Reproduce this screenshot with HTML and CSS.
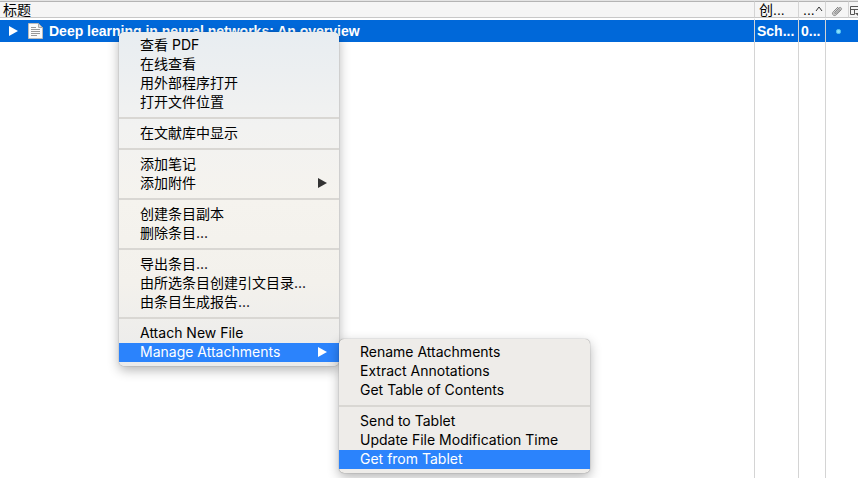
FILE: index.html
```html
<!DOCTYPE html>
<html lang="zh-CN">
<head>
<meta charset="utf-8">
<title>Library</title>
<link rel="stylesheet" href="styles.css">
</head>
<body>
<table class="items">
  <colgroup>
    <col>
    <col class="col-creator">
    <col class="col-year">
    <col class="col-attach">
    <col class="col-picker">
  </colgroup>
  <thead>
    <tr>
      <th>标题</th>
      <th>创...</th>
      <th><span class="sorted">...<svg class="sort" viewBox="0 0 8 8"><path d="M1 5 4 1l3 4"/></svg></span></th>
      <th class="icon-cell"><svg class="clip" viewBox="0 0 12 12"><path class="clip-body" d="M2.500 9.500 9 3"/><path d="M9.500 4 5.200 8.300c-.8.8-2-.3-1.200-1.200L8 3c1.600-1.500 3.500.4 2 2L5.300 9.800C3 12 0 9 2.200 6.800L7 2"/></svg></th>
      <th class="icon-cell"><svg class="picker" viewBox="0 0 12 12"><path d="M1.500 1.500h10v5M1.500 1.500v8h4M1.500 4.500h10M5.500 4.500v5"/><path class="solid" d="M6 8h6l-3 3z"/></svg></th>
    </tr>
  </thead>
  <tbody>
    <tr class="selected">
      <td>
        <div class="title">
          <svg class="twisty" viewBox="0 0 9 10"><path d="M0 0 9 5 0 10z"/></svg>
          <svg class="page" viewBox="0 0 15 16"><path class="sheet" d="M.5.500h10l4 4v11H.500z"/><path class="fold" d="M10.500.500v4h4z"/><path class="lines" d="M3 4.500h5M3 6.500h9M3 8.500h9M3 10.500h9M3 12.500h6"/></svg>
          <span>Deep learning in neural networks: An overview</span>
        </div>
      </td>
      <td>Sch...</td>
      <td>0...</td>
      <td class="icon-cell"><i class="dot"></i></td>
      <td></td>
    </tr>
    <tr class="rest"><td></td><td></td><td></td><td></td><td></td></tr>
  </tbody>
</table>

<div class="menu context" role="menu">
  <button role="menuitem">查看 PDF</button>
  <button role="menuitem">在线查看</button>
  <button role="menuitem">用外部程序打开</button>
  <button role="menuitem">打开文件位置</button>
  <hr>
  <button role="menuitem">在文献库中显示</button>
  <hr>
  <button role="menuitem">添加笔记</button>
  <button role="menuitem">添加附件<svg class="arrow" viewBox="0 0 9 10"><path d="M0 0 9 5 0 10z"/></svg></button>
  <hr>
  <button role="menuitem">创建条目副本</button>
  <button role="menuitem">删除条目...</button>
  <hr>
  <button role="menuitem">导出条目...</button>
  <button role="menuitem">由所选条目创建引文目录...</button>
  <button role="menuitem">由条目生成报告...</button>
  <hr>
  <button role="menuitem">Attach New File</button>
  <button role="menuitem" class="active">Manage Attachments<svg class="arrow" viewBox="0 0 9 10"><path d="M0 0 9 5 0 10z"/></svg></button>
</div>

<div class="menu submenu" role="menu">
  <button role="menuitem">Rename Attachments</button>
  <button role="menuitem">Extract Annotations</button>
  <button role="menuitem">Get Table of Contents</button>
  <hr>
  <button role="menuitem">Send to Tablet</button>
  <button role="menuitem">Update File Modification Time</button>
  <button role="menuitem" class="active">Get from Tablet</button>
</div>
</body>
</html>
```
FILE: styles.css
```css
* {
  box-sizing: border-box;
}

body {
  margin: 0;
  height: 100vh;
  overflow: hidden;
  background: #fff;
  color: #000;
  font: 14px "Liberation Sans", "Noto Sans CJK SC", sans-serif;
}

.items {
  width: 100%;
  height: 100vh;
  table-layout: fixed;
  border-collapse: separate;
  border-spacing: 0;
  border-top: 1px solid #e4e4e4;
}

.col-creator { width: 44px; }
.col-year { width: 27px; }
.col-attach { width: 23px; }
.col-picker { width: 10px; }

th,
td {
  padding: 0 0 0 3px;
  overflow: hidden;
  white-space: nowrap;
  text-align: left;
  border-left: 1px solid #d4d4d4;
}

th:first-child,
td:first-child {
  border-left: 0;
}

td:last-child {
  border-left: 0;
}

th {
  height: 17px;
  padding-top: 1px;
  font-weight: 400;
  line-height: 14px;
  background: #f5f5f5;
  border-top: 1px solid #b4b4b4;
  border-bottom: 1px solid #c8c8c8;
}

th + th {
  padding-left: 4px;
}

th.icon-cell,
td.icon-cell {
  padding: 0;
  text-align: center;
}

.selected td {
  height: 24px;
  padding-left: 2px;
  border-top: 2px solid #fff;
  background: #0068d9;
  color: #fff;
  font-size: 14px;
  font-weight: 700;
  line-height: 22px;
}

.rest td {
  height: auto;
}

.title {
  display: flex;
  align-items: center;
  padding-left: 7px;
}

.twisty {
  width: 9px;
  height: 10px;
  margin-right: 10px;
  fill: #fff;
}

.page {
  width: 15px;
  height: 16px;
  margin-right: 6px;
}

.sheet { fill: #fafafa; stroke: #bbb; }
.fold { fill: #ddd; stroke: #aaa; }
.lines { fill: none; stroke: #999; }

.sorted {
  display: flex;
  align-items: center;
}

.sort {
  width: 8px;
  height: 8px;
  fill: none;
  stroke: #333;
}

.clip {
  width: 12px;
  height: 12px;
  vertical-align: middle;
  fill: none;
  stroke: #888;
}

.clip-body {
  stroke: #c4c4c4;
  stroke-width: 3;
}

.picker {
  width: 12px;
  height: 12px;
  vertical-align: middle;
  fill: none;
  stroke: #555;
}

.solid {
  fill: #555;
  stroke: none;
}

.dot {
  display: block;
  width: 5px;
  height: 5px;
  margin: 0 auto;
  border: 1px solid #4fbdf0;
  border-radius: 2px;
  background: #8be0fa;
}

.menu {
  position: absolute;
  display: flex;
  flex-direction: column;
  padding: 4px 0;
  border-radius: 5px;
  box-shadow: 0 0 1px rgba(0, 0, 0, .55), 0 4px 12px rgba(0, 0, 0, .3);
}

.context {
  top: 32px;
  left: 119px;
  width: 220px;
  background: linear-gradient(#e8edf1, #f2f2f1 28%, #f5f3ee 50%, #f3f1ec 75%, #ebebeb);
}

.submenu {
  top: 339px;
  left: 339px;
  width: 251px;
  background: #eeece9;
}

.menu button {
  display: flex;
  align-items: center;
  justify-content: space-between;
  height: 19px;
  padding: 0 12px 2px 21px;
  border: 0;
  background: none;
  color: #000;
  font: 14px/17px Inter, "Noto Sans CJK SC", sans-serif;
  white-space: nowrap;
}

.menu .active {
  background: #2b83fc;
  color: #fff;
}

.menu hr {
  width: 100%;
  height: 2px;
  margin: 5px 0;
  border: 0;
  background: #d9d7d3;
}

.arrow {
  width: 9px;
  height: 10px;
  fill: #333;
}

.active .arrow {
  fill: #fff;
}
```
